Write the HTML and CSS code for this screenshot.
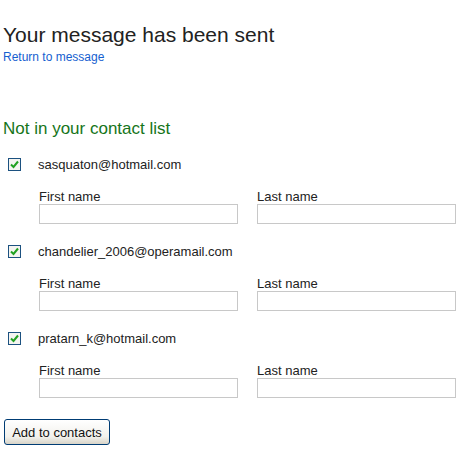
FILE: index.html
```html
<!DOCTYPE html>
<html lang="en">
<head>
<meta charset="UTF-8">
<title>Message sent</title>
<link rel="stylesheet" href="styles.css">
</head>
<body>
    <div class="page">
        <h1>Your message has been sent</h1>
        <a class="back-link" href="#">Return to message</a>

        <h2>Not in your contact list</h2>

        <div class="contact">
            <div class="contact-head">
                <span class="check"><svg width="9" height="9" viewBox="0 0 9 9"><path d="M1 4.5 L3.5 7 L8 1.5" fill="none" stroke="#21a121" stroke-width="2"/></svg></span>
                <span class="email">sasquaton@hotmail.com</span>
            </div>
            <div class="names">
                <div class="field">
                    <label>First name</label>
                    <input type="text">
                </div>
                <div class="field">
                    <label>Last name</label>
                    <input type="text">
                </div>
            </div>
        </div>

        <div class="contact">
            <div class="contact-head">
                <span class="check"><svg width="9" height="9" viewBox="0 0 9 9"><path d="M1 4.5 L3.5 7 L8 1.5" fill="none" stroke="#21a121" stroke-width="2"/></svg></span>
                <span class="email">chandelier_2006@operamail.com</span>
            </div>
            <div class="names">
                <div class="field">
                    <label>First name</label>
                    <input type="text">
                </div>
                <div class="field">
                    <label>Last name</label>
                    <input type="text">
                </div>
            </div>
        </div>

        <div class="contact">
            <div class="contact-head">
                <span class="check"><svg width="9" height="9" viewBox="0 0 9 9"><path d="M1 4.5 L3.5 7 L8 1.5" fill="none" stroke="#21a121" stroke-width="2"/></svg></span>
                <span class="email">pratarn_k@hotmail.com</span>
            </div>
            <div class="names">
                <div class="field">
                    <label>First name</label>
                    <input type="text">
                </div>
                <div class="field">
                    <label>Last name</label>
                    <input type="text">
                </div>
            </div>
        </div>

        <button type="button" class="add-btn">Add to contacts</button>
    </div>
</body>
</html>
```

FILE: styles.css
```css
body {
    margin: 0;
    background: #fff;
    font-family: "Liberation Sans", Arial, sans-serif;
    color: #222;
}

.page {
    padding: 20px 0 0 3px;
}

h1 {
    margin: 0;
    font-size: 21px;
    line-height: 30px;
    font-weight: normal;
    color: #222;
}

.back-link {
    display: block;
    font-size: 12px;
    line-height: 14px;
    color: #1560d0;
    text-decoration: none;
}

h2 {
    margin: 55px 0 0 0;
    font-size: 17px;
    line-height: 20px;
    font-weight: normal;
    color: #16751a;
}

.contact {
    margin-top: 18px;
}

.contact + .contact {
    margin-top: 20px;
}

.contact-head {
    display: flex;
    align-items: center;
    height: 14px;
}

.check {
    width: 11px;
    height: 11px;
    border: 1px solid #1c5180;
    margin-left: 5px;
    display: flex;
    align-items: center;
    justify-content: center;
    background: #f4f4f0;
}

.email {
    margin-left: 17px;
    font-size: 13px;
}

.names {
    display: flex;
    gap: 19px;
    margin: 18px 0 0 36px;
}

.field label {
    display: block;
    font-size: 13px;
    line-height: 15px;
    color: #222;
}

.field input {
    display: block;
    box-sizing: border-box;
    width: 199px;
    height: 20px;
    margin: 0;
    border: 1px solid #c8c8c8;
    padding: 0 3px;
}

.add-btn {
    margin: 21px 0 0 1px;
    width: 106px;
    height: 26px;
    padding: 0;
    border: 1px solid #003c74;
    border-radius: 3px;
    background: linear-gradient(#ffffff, #f2f1ec 70%, #d8d4c8);
    font-family: "Liberation Sans", Arial, sans-serif;
    font-size: 13px;
    color: #111;
}
```
